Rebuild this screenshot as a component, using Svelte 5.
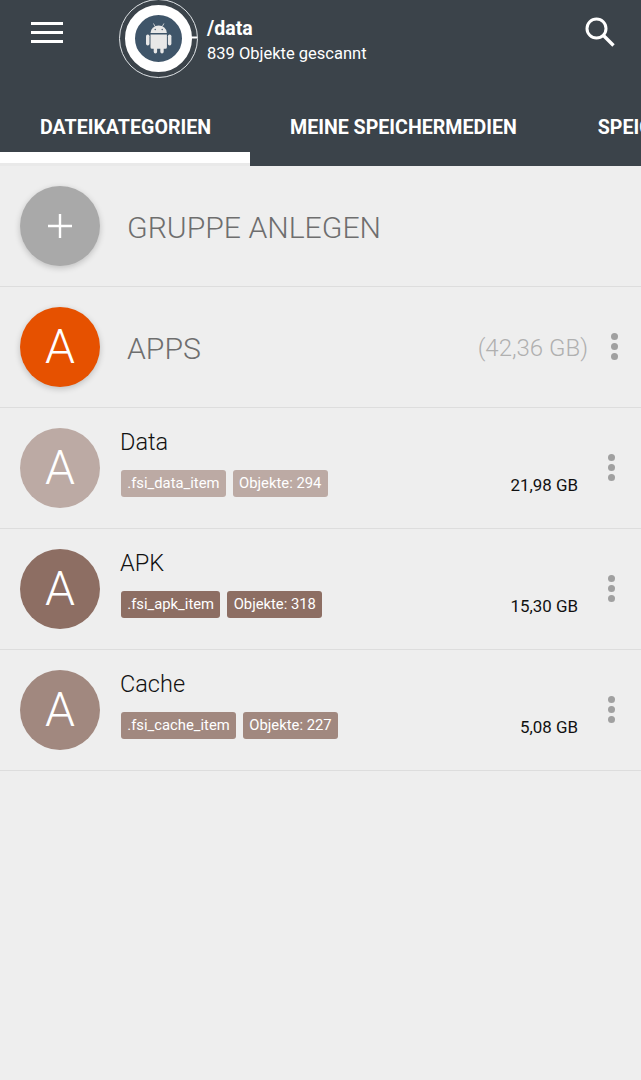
<script>
    const items = [
        { name: "Data", tag: ".fsi_data_item", count: 294, size: "21,98 GB", color: "#bcaaa4" },
        { name: "APK", tag: ".fsi_apk_item", count: 318, size: "15,30 GB", color: "#8d6e63" },
        { name: "Cache", tag: ".fsi_cache_item", count: 227, size: "5,08 GB", color: "#a1887f" }
    ];
</script>

<div class="page">
    <header>
        <div class="top">
            <button class="menu" aria-label="Menü">
                <span></span><span></span><span></span>
            </button>
            <svg class="ring" width="80" height="80" viewBox="0 0 80 80">
                <circle cx="39.500" cy="39.500" r="39" fill="none" stroke="#dfe3e6" stroke-width="1"/>
                <circle cx="39.500" cy="39.500" r="28.500" fill="#3f5569" stroke="#fff" stroke-width="10"/>
                <rect x="68" y="37.500" width="10" height="2" fill="#fff"/>
                <g fill="#e8e8e8">
                    <path d="M31.500 34a8.200 7.500 0 0 1 16.400 0z"/>
                    <path d="M34.500 24.500l1.600 3M44.900 24.500l-1.600 3" stroke="#e8e8e8" stroke-width="0.800"/>
                    <path d="M31.500 35.500h16.400v12.700a1.500 1.500 0 0 1-1.500 1.500h-1.700v3a1.700 1.700 0 0 1-3.400 0v-3h-3.200v3a1.700 1.700 0 0 1-3.400 0v-3h-1.700a1.500 1.500 0 0 1-1.500-1.500z"/>
                    <rect x="27" y="35.500" width="3.500" height="11" rx="1.700"/>
                    <rect x="48.900" y="35.500" width="3.500" height="11" rx="1.700"/>
                </g>
                <circle cx="36.200" cy="30.500" r="0.700" fill="#3f5569"/>
                <circle cx="43.200" cy="30.500" r="0.700" fill="#3f5569"/>
            </svg>
            <div class="path">
                <div class="dir">/data</div>
                <div class="scan">839 Objekte gescannt</div>
            </div>
            <svg class="search" width="34" height="34" viewBox="0 0 34 34" fill="none" stroke="#fff">
                <circle cx="13.500" cy="13.500" r="9.500" stroke-width="3"/>
                <path d="M20.500 20.500L30.500 30.500" stroke-width="3.400"/>
            </svg>
        </div>
        <nav>
            <div class="tab active">DATEIKATEGORIEN</div>
            <div class="tab second">MEINE SPEICHERMEDIEN</div>
            <div class="tab third">SPEICHER</div>
        </nav>
    </header>

    <section class="row">
        <div class="circle add">
            <svg width="26" height="26" viewBox="0 0 26 26"><path d="M13 1v24M1 13h24" stroke="#fff" stroke-width="2.400"/></svg>
        </div>
        <div class="heading">GRUPPE ANLEGEN</div>
    </section>

    <section class="row">
        <div class="circle apps">A</div>
        <div class="heading">APPS</div>
        <div class="total">(42,36 GB)</div>
        <div class="dots group"><i></i><i></i><i></i></div>
    </section>

    {#each items as item}
        <section class="row">
            <div class="circle flat" style="background: {item.color}">A</div>
            <div class="info">
                <div class="name">{item.name}</div>
                <div class="tags">
                    <span style="background: {item.color}">{item.tag}</span>
                    <span style="background: {item.color}">Objekte: {item.count}</span>
                </div>
            </div>
            <div class="size">{item.size}</div>
            <div class="dots"><i></i><i></i><i></i></div>
        </section>
    {/each}
</div>

<style>
    :global(body) {
        background: #eeeeee;
    }
    .page {
        font-family: Roboto, "Liberation Sans", sans-serif;
        width: 641px;
        height: 1080px;
        overflow: hidden;
        background: #eeeeee;
    }
    header {
        background: #3b434a;
        height: 166px;
        display: flex;
        flex-direction: column;
    }
    .top {
        display: flex;
        align-items: flex-start;
        height: 103px;
    }
    .menu {
        background: none;
        border: 0;
        padding: 0;
        margin: 22px 0 0 31px;
        width: 32px;
        height: 21px;
        display: flex;
        flex-direction: column;
        justify-content: space-between;
    }
    .menu span {
        display: block;
        height: 3px;
        background: #fff;
    }
    .ring {
        margin: -1px 0 0 56px;
        flex: none;
    }
    .path {
        margin: 17px 0 0 8px;
        color: #fff;
        flex: 1;
    }
    .dir {
        font-size: 19.500px;
        font-weight: 700;
        line-height: 24px;
    }
    .scan {
        font-size: 16.500px;
        line-height: 24px;
        margin-top: 1px;
    }
    .search {
        margin: 15px 24px 0 0;
    }
    nav {
        display: flex;
        flex: 1;
        color: #fff;
        font-size: 19.600px;
        font-weight: 700;
        white-space: nowrap;
        overflow: hidden;
    }
    .tab {
        padding-top: 13px;
    }
    .active {
        width: 250px;
        flex: none;
        box-sizing: border-box;
        padding-left: 40px;
        border-bottom: 11px solid #fff;
        height: 60px;
        box-shadow: 0 3px 0 #e9e9e9;
    }
    .second {
        margin-left: 40px;
    }
    .third {
        margin-left: 81px;
    }
    .row {
        height: 121px;
        box-sizing: border-box;
        border-bottom: 1px solid #dddddd;
        display: flex;
        align-items: center;
        padding-left: 20px;
        position: relative;
    }
    .circle {
        width: 80px;
        height: 80px;
        border-radius: 50%;
        flex: none;
        display: flex;
        align-items: center;
        justify-content: center;
        color: #fff;
        font-size: 48px;
        font-weight: 300;
        margin-top: -1px;
    }
    .add {
        background: #a9a9a9;
        box-shadow: 0 2px 6px rgba(0, 0, 0, 0.2);
    }
    .apps {
        background: #e65100;
        box-shadow: 0 2px 6px rgba(0, 0, 0, 0.2);
    }
    .heading {
        margin-left: 27px;
        font-size: 30.200px;
        font-weight: 300;
        color: #6e6e6e;
        flex: 1;
        padding-top: 2px;
    }
    .total {
        font-size: 24px;
        font-weight: 300;
        color: #b0b0b0;
        margin-right: 23px;
        padding-top: 2px;
    }
    .dots {
        display: flex;
        flex-direction: column;
        gap: 3px;
        margin-right: 26px;
        margin-top: -1px;
    }
    .dots.group {
        margin-right: 23px;
    }
    .dots i {
        width: 7px;
        height: 7px;
        border-radius: 50%;
        background: #a0a0a0;
    }
    .info {
        margin-left: 21px;
        flex: 1;
        align-self: flex-start;
    }
    .name {
        font-size: 23.500px;
        font-weight: 300;
        color: #111;
        line-height: 28px;
        margin: 20px 0 0 -1px;
    }
    .tags {
        display: flex;
        gap: 7px;
        margin-top: 14px;
    }
    .tags span {
        color: #fff;
        font-size: 14.800px;
        line-height: 27px;
        padding: 0 6.300px;
        border-radius: 3px;
    }
    .size {
        align-self: flex-start;
        margin: 65px 30px 0 0;
        font-size: 16.900px;
        color: #111;
        line-height: 24px;
    }
    .row .dots:not(.group) {
        align-self: flex-start;
        margin-top: 46px;
    }
</style>
